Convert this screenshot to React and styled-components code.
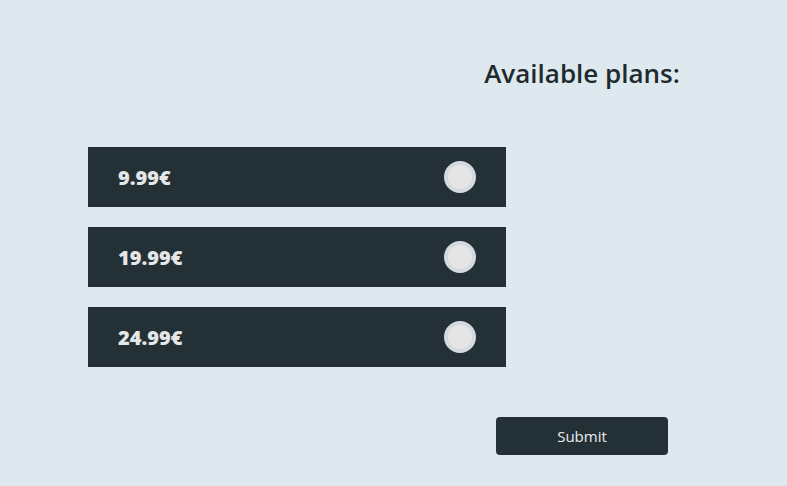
import styled, { createGlobalStyle } from 'styled-components';

const GlobalStyle = createGlobalStyle`
    body {
        margin: 0;
        background: #dde9ee;
        font-family: 'Open Sans', 'Noto Sans', sans-serif;
    }
`

const plans = ['9.99€', '19.99€', '24.99€'];

const App = () => {
    return (
        <Page>
            <GlobalStyle />
            <Side>
                <Title>Available plans:</Title>
            </Side>
            <Plans>
                {plans.map(price => (
                    <Plan key={price}>
                        <Price>{price}</Price>
                        <Radio />
                    </Plan>
                ))}
            </Plans>
            <Side>
                <Submit>Submit</Submit>
            </Side>
        </Page>
    )
};

export default App;

const Page = styled.div`
    padding: 55px 0 0 88px;
    display: flex;
    flex-direction: column;
`
const Side = styled.div`
    margin-left: 408px;
    width: 172px;
    display: flex;
    justify-content: center;
    white-space: nowrap;
`
const Title = styled.h1`
    margin: 0;
    font-size: 26px;
    line-height: 36px;
    font-weight: 600;
    color: #1f2a2f;
`
const Plans = styled.div`
    margin: 56px 0 50px;
    width: 418px;
    display: flex;
    flex-direction: column;
    gap: 20px;
`
const Plan = styled.label`
    height: 60px;
    background: #233137;
    display: flex;
    align-items: center;
    justify-content: space-between;
    padding: 0 30px;
`
const Price = styled.span`
    font-size: 20px;
    font-weight: 800;
    color: #e6e6e6;
`
const Radio = styled.span`
    width: 24px;
    height: 24px;
    border-radius: 50%;
    background: #e5e5e5;
    border: 4px solid #d2d9e1;
`
const Submit = styled.button`
    width: 172px;
    height: 38px;
    border: none;
    border-radius: 4px;
    background: #233137;
    color: #ececec;
    font-family: 'Open Sans', 'Noto Sans', sans-serif;
    font-size: 15px;
`
